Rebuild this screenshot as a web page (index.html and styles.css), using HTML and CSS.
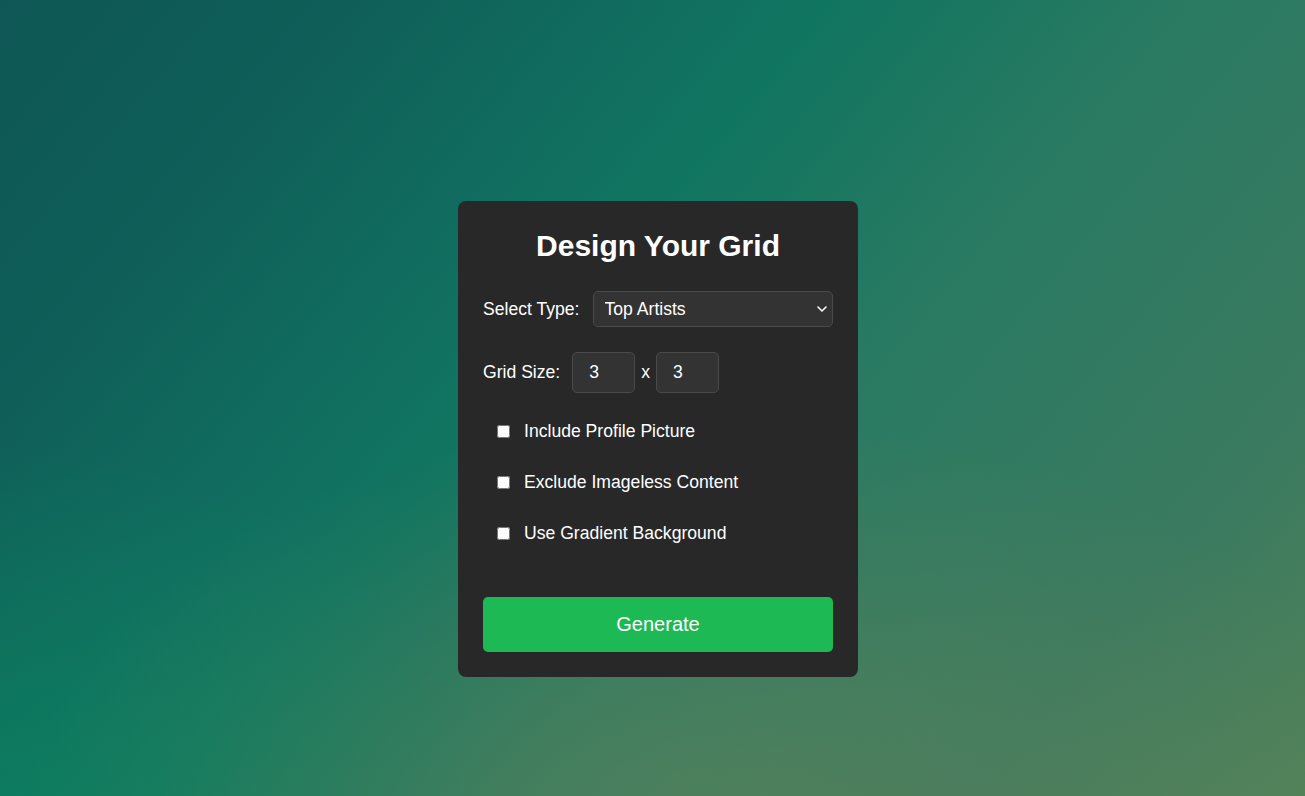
FILE: index.html
```html
<!DOCTYPE html>
<html>
<head>
<meta charset="utf-8">
<link rel="stylesheet" href="styles.css">
</head>
<body>
<main class="page">
  <section class="card">
    <h2 class="title">Design Your Grid</h2>
    <div class="row">
      <label class="label" for="type">Select Type:</label>
      <div class="select-wrap">
        <select id="type" class="select">
          <option>Top Artists</option>
          <option>Top Albums</option>
          <option>Top Tracks</option>
        </select>
        <svg class="chev" viewBox="0 0 10 6" width="10" height="6"><path d="M1 1l4 4 4-4" fill="none" stroke="#fff" stroke-width="1.6" stroke-linecap="round" stroke-linejoin="round"/></svg>
      </div>
    </div>
    <div class="row grid-row">
      <span class="label">Grid Size:</span>
      <input class="num" type="text" value="3">
      <span class="times">x</span>
      <input class="num" type="text" value="3">
    </div>
    <div class="checks">
      <label class="check"><input type="checkbox" class="cb"><span>Include Profile Picture</span></label>
      <label class="check"><input type="checkbox" class="cb"><span>Exclude Imageless Content</span></label>
      <label class="check"><input type="checkbox" class="cb"><span>Use Gradient Background</span></label>
    </div>
    <button class="btn">Generate</button>
  </section>
</main>
</body>
</html>
```
FILE: styles.css
```css
html, body {
  margin: 0;
  height: 100%;
}
body {
  font-family: "Liberation Sans", Arial, sans-serif;
  color: #fff;
  background:
    radial-gradient(ellipse 700px 420px at 55% 105%, rgba(120, 135, 85, 0.45), rgba(120, 135, 85, 0) 100%),
    radial-gradient(ellipse 500px 350px at 0% 100%, rgba(10, 135, 95, 0.55), rgba(10, 135, 95, 0) 100%),
    linear-gradient(130deg, #0e5756 0%, #0f5e58 17%, #117060 36%, #107560 42%, #2a7a62 60%, #2e7a62 66%, #3a7a60 83%, #508259 100%);
}
.page {
  height: 796px;
  box-sizing: border-box;
  padding-left: 11px;
  display: flex;
  justify-content: center;
  align-items: center;
}
.card {
  width: 350px;
  padding: 25px;
  background: #282828;
  border-radius: 8px;
  display: flex;
  flex-direction: column;
  margin-top: 82px;
}
.title {
  margin: 0 0 25px;
  text-align: center;
  font-size: 30px;
  font-weight: bold;
  line-height: 40px;
}
.row {
  display: flex;
  align-items: center;
  margin-bottom: 25px;
}
.label {
  font-size: 17.6px;
  margin-right: 13px;
}
.select-wrap {
  position: relative;
  flex: 1;
}
.select {
  appearance: none;
  -webkit-appearance: none;
  width: 100%;
  height: 36px;
  box-sizing: border-box;
  background: #333;
  color: #fff;
  border: 1px solid #4a4a4a;
  border-radius: 5px;
  font-family: "Liberation Sans", Arial, sans-serif;
  font-size: 17.6px;
  padding: 0 11px;
}
.chev {
  position: absolute;
  right: 6px;
  top: 15px;
  pointer-events: none;
}
.grid-row .label {
  margin-right: 12px;
}
.num {
  width: 63px;
  height: 41px;
  box-sizing: border-box;
  background: #333;
  color: #fff;
  border: 1px solid #4a4a4a;
  border-radius: 5px;
  font-family: "Liberation Sans", Arial, sans-serif;
  font-size: 17.6px;
  padding: 0 16px;
}
.times {
  font-size: 17.6px;
  margin: 0 6px;
}
.checks {
  display: flex;
  flex-direction: column;
  gap: 25px;
  padding-left: 10px;
}
.check {
  display: flex;
  align-items: center;
  font-size: 17.6px;
  line-height: 26px;
}
.cb {
  width: 13px;
  height: 13px;
  margin: 0 14px 0 4px;
}
.btn {
  margin-top: 51px;
  height: 55px;
  width: 100%;
  border: none;
  border-radius: 5px;
  background: #1db954;
  color: #fff;
  font-family: "Liberation Sans", Arial, sans-serif;
  font-size: 20px;
}
```
